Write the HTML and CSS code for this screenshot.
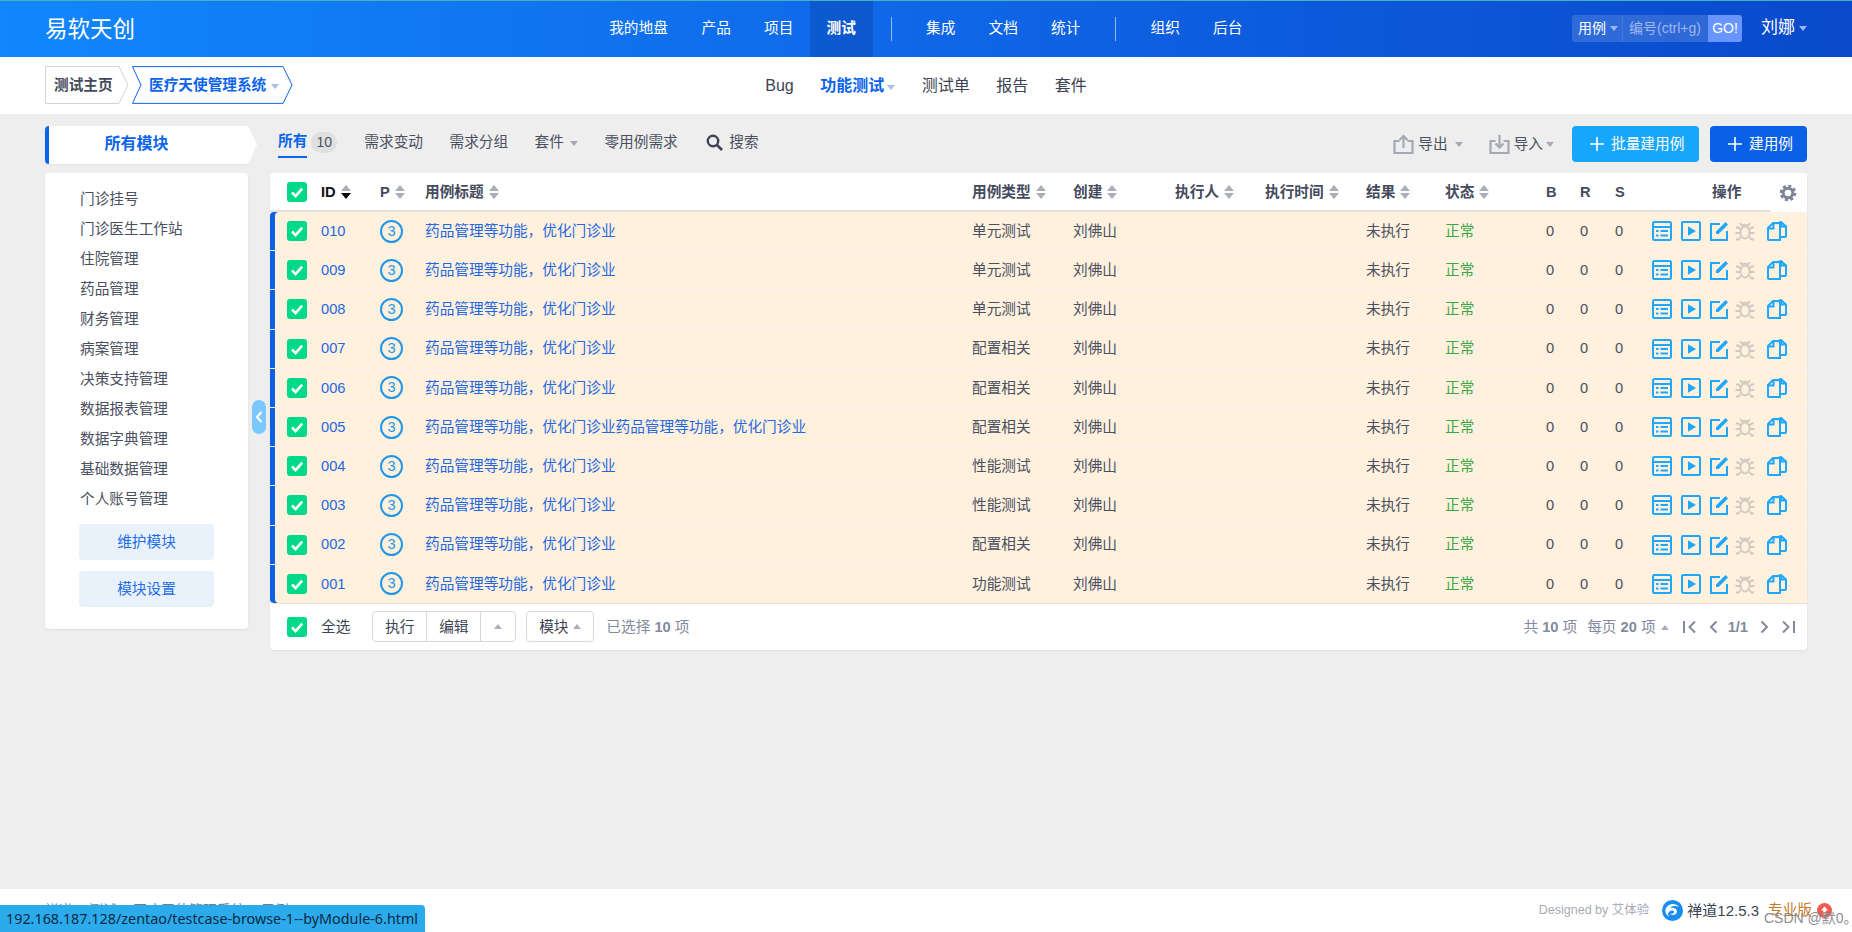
FILE: index.html
```html
<!DOCTYPE html>
<html lang="zh-CN">
<head>
<meta charset="utf-8">
<title>用例 - 医疗天使管理系统</title>
<link rel="stylesheet" href="styles.css">
</head>
<body>
<svg class="sprite" width="0" height="0" aria-hidden="true">
  <symbol id="i-check" viewBox="0 0 20 20"><path d="M5 10.500l3.600 3.600L15.200 6.600" fill="none" stroke="#fff" stroke-width="2.600"/></symbol>
  <symbol id="i-list" viewBox="0 0 20 20"><g fill="none" stroke="currentColor" stroke-width="2"><rect x="1" y="1" width="18" height="18" rx="1.500"/><path d="M1 6h18M4 10h2.500M8.500 10H16M4 14.500h2.500M8.500 14.500H16"/></g></symbol>
  <symbol id="i-play" viewBox="0 0 20 20"><rect x="1" y="1" width="18" height="18" rx="1" fill="none" stroke="currentColor" stroke-width="2"/><path d="M7 5.200l8 4.800-8 4.800z" fill="currentColor"/></symbol>
  <symbol id="i-edit" viewBox="0 0 20 20"><path d="M11 3H2v16h16v-9" fill="none" stroke="currentColor" stroke-width="2"/><path d="M7 13v-2.600L16.600 1 19 3.400 9.600 13z" fill="currentColor"/></symbol>
  <symbol id="i-bug" viewBox="0 0 20 20"><g fill="none" stroke="currentColor" stroke-width="1.800"><ellipse cx="10" cy="11.500" rx="4.600" ry="6"/><path d="M6.500 5.500C7 3 13 3 13.500 5.500M5 2l2 2.500M15 2l-2 2.500M1 6.500h2.500l2 2M19 6.500h-2.500l-2 2M.5 12h4.500M15 12h4.500M1 18.500h2.500l2-2.500M19 18.500h-2.500l-2-2.500"/></g></symbol>
  <symbol id="i-copy" viewBox="0 0 20 20"><g fill="none" stroke="currentColor" stroke-width="2"><path d="M1 7l5-5h7v17H2a1 1 0 0 1-1-1zM1 7.500h5.500V2"/><path d="M9.500 2.500L14 1l5 4.500V15a1 1 0 0 1-1 1h-5M14 1v4.500h5"/></g></symbol>
  <symbol id="i-plus" viewBox="0 0 14 14"><path d="M7 0v14M0 7h14" stroke="currentColor" stroke-width="1.600"/></symbol>
</svg>

<header class="topbar">
  <a class="logo">易软天创</a>
  <nav class="mainnav">
    <a class="mainnav-item">我的地盘</a>
    <a class="mainnav-item">产品</a>
    <a class="mainnav-item">项目</a>
    <a class="mainnav-item is-active">测试</a>
    <span class="mainnav-sep"></span>
    <a class="mainnav-item">集成</a>
    <a class="mainnav-item">文档</a>
    <a class="mainnav-item">统计</a>
    <span class="mainnav-sep"></span>
    <a class="mainnav-item">组织</a>
    <a class="mainnav-item">后台</a>
  </nav>
  <div class="topbar-right">
    <div class="quick-search">
      <span class="qs-type">用例<i class="caret caret-light"></i></span>
      <span class="qs-input">编号(ctrl+g)</span>
      <span class="qs-go">GO!</span>
    </div>
    <a class="user">刘娜<i class="caret caret-light"></i></a>
  </div>
</header>

<div class="subbar">
  <div class="crumbs">
    <a class="crumb crumb-home">
      <svg class="crumb-shape" viewBox="0 0 84 38"><polygon points="0.500,0.500 74,0.500 83,19 74,37.500 0.500,37.500" fill="#fff" stroke="#cfd3de"/></svg>
      <span class="crumb-text">测试主页</span>
    </a>
    <a class="crumb crumb-product">
      <svg class="crumb-shape" viewBox="0 0 162 38"><polygon points="0.500,0.500 152,0.500 161,19 152,37.500 0.500,37.500 9,19" fill="#fff" stroke="#0c64eb"/></svg>
      <span class="crumb-text">医疗天使管理系统<i class="caret caret-pale"></i></span>
    </a>
  </div>
  <nav class="subnav">
    <a class="subnav-item">Bug</a>
    <a class="subnav-item is-active">功能测试<i class="caret caret-pale"></i></a>
    <a class="subnav-item">测试单</a>
    <a class="subnav-item">报告</a>
    <a class="subnav-item">套件</a>
  </nav>
  <div></div>
</div>

<main class="main">
  <aside class="side">
    <div class="side-title">所有模块</div>
    <div class="side-card">
      <ul class="tree">
        <li>门诊挂号</li>
        <li>门诊医生工作站</li>
        <li>住院管理</li>
        <li>药品管理</li>
        <li>财务管理</li>
        <li>病案管理</li>
        <li>决策支持管理</li>
        <li>数据报表管理</li>
        <li>数据字典管理</li>
        <li>基础数据管理</li>
        <li>个人账号管理</li>
      </ul>
      <a class="side-btn">维护模块</a>
      <a class="side-btn">模块设置</a>
    </div>
    <a class="side-toggle"><svg width="8" height="12" viewBox="0 0 8 12"><path d="M6.500 1L2 6l4.500 5" fill="none" stroke="#fff" stroke-width="2.200"/></svg></a>
  </aside>

  <section class="content">
    <div class="toolbar">
      <div class="tabs">
        <a class="tab is-active">所有</a><span class="tab-badge">10</span>
        <a class="tab">需求变动</a>
        <a class="tab">需求分组</a>
        <a class="tab">套件<i class="caret caret-grey caret-gap"></i></a>
        <a class="tab">零用例需求</a>
        <a class="tab tab-search"><svg width="17" height="17" viewBox="0 0 17 17"><circle cx="7" cy="7" r="5.200" fill="none" stroke="#3c4353" stroke-width="2.400"/><path d="M11 11l5 5" stroke="#3c4353" stroke-width="2.600"/></svg>搜索</a>
      </div>
      <div class="actions">
        <a class="tool"><svg width="21" height="20" viewBox="0 0 21 20"><path d="M6.500 7H1.500v12h18V7h-5M10.500 14V2M6.500 6l4-4 4 4" fill="none" stroke="#a4a9b4" stroke-width="2.200"/></svg>导出<i class="caret caret-grey caret-gap"></i></a>
        <a class="tool"><svg width="21" height="20" viewBox="0 0 21 20"><path d="M6.500 7H1.500v12h18V7h-5M10.500 1v12M6.500 9.500l4 4 4-4" fill="none" stroke="#a4a9b4" stroke-width="2.200"/></svg>导入<i class="caret caret-grey"></i></a>
        <a class="btn btn-batch"><svg class="btn-icon"><use href="#i-plus"/></svg>批量建用例</a>
        <a class="btn btn-create"><svg class="btn-icon"><use href="#i-plus"/></svg>建用例</a>
      </div>
    </div>

    <div class="card">
      <table class="grid">
        <colgroup>
          <col class="c-cb"><col class="c-id"><col class="c-p"><col class="c-title"><col class="c-type"><col class="c-by"><col class="c-exec"><col class="c-time"><col class="c-res"><col class="c-st"><col class="c-b"><col class="c-r"><col class="c-s"><col class="c-ops">
        </colgroup>
        <thead>
          <tr>
            <th class="cell-cb"><span class="cb"><svg><use href="#i-check"/></svg></span></th>
            <th class="th-strong">ID<i class="sort sort-desc"></i></th>
            <th>P<i class="sort"></i></th>
            <th>用例标题<i class="sort"></i></th>
            <th>用例类型<i class="sort"></i></th>
            <th>创建<i class="sort"></i></th>
            <th>执行人<i class="sort"></i></th>
            <th>执行时间<i class="sort"></i></th>
            <th>结果<i class="sort"></i></th>
            <th>状态<i class="sort"></i></th>
            <th>B</th><th>R</th><th>S</th>
            <th class="th-ops">操作<span class="gear"><svg width="18" height="18" viewBox="0 0 18 18"><circle cx="9" cy="9" r="4.800" fill="none" stroke="#7d8596" stroke-width="3"/><circle cx="9" cy="9" r="7" fill="none" stroke="#7d8596" stroke-width="2.600" stroke-dasharray="3.100 2.400"/></svg></span></th>
          </tr>
        </thead>
        <tbody>
          <tr><td class="cell-cb"><span class="cb"><svg><use href="#i-check"/></svg></span></td><td class="link">010</td><td><span class="pri">3</span></td><td class="link">药品管理等功能，优化门诊业</td><td>单元测试</td><td>刘佛山</td><td></td><td></td><td>未执行</td><td class="ok">正常</td><td>0</td><td>0</td><td>0</td><td><div class="ops"><svg><use href="#i-list"/></svg><svg><use href="#i-play"/></svg><svg><use href="#i-edit"/></svg><svg class="op-off"><use href="#i-bug"/></svg><svg class="op-last"><use href="#i-copy"/></svg></div></td></tr>
          <tr><td class="cell-cb"><span class="cb"><svg><use href="#i-check"/></svg></span></td><td class="link">009</td><td><span class="pri">3</span></td><td class="link">药品管理等功能，优化门诊业</td><td>单元测试</td><td>刘佛山</td><td></td><td></td><td>未执行</td><td class="ok">正常</td><td>0</td><td>0</td><td>0</td><td><div class="ops"><svg><use href="#i-list"/></svg><svg><use href="#i-play"/></svg><svg><use href="#i-edit"/></svg><svg class="op-off"><use href="#i-bug"/></svg><svg class="op-last"><use href="#i-copy"/></svg></div></td></tr>
          <tr><td class="cell-cb"><span class="cb"><svg><use href="#i-check"/></svg></span></td><td class="link">008</td><td><span class="pri">3</span></td><td class="link">药品管理等功能，优化门诊业</td><td>单元测试</td><td>刘佛山</td><td></td><td></td><td>未执行</td><td class="ok">正常</td><td>0</td><td>0</td><td>0</td><td><div class="ops"><svg><use href="#i-list"/></svg><svg><use href="#i-play"/></svg><svg><use href="#i-edit"/></svg><svg class="op-off"><use href="#i-bug"/></svg><svg class="op-last"><use href="#i-copy"/></svg></div></td></tr>
          <tr><td class="cell-cb"><span class="cb"><svg><use href="#i-check"/></svg></span></td><td class="link">007</td><td><span class="pri">3</span></td><td class="link">药品管理等功能，优化门诊业</td><td>配置相关</td><td>刘佛山</td><td></td><td></td><td>未执行</td><td class="ok">正常</td><td>0</td><td>0</td><td>0</td><td><div class="ops"><svg><use href="#i-list"/></svg><svg><use href="#i-play"/></svg><svg><use href="#i-edit"/></svg><svg class="op-off"><use href="#i-bug"/></svg><svg class="op-last"><use href="#i-copy"/></svg></div></td></tr>
          <tr><td class="cell-cb"><span class="cb"><svg><use href="#i-check"/></svg></span></td><td class="link">006</td><td><span class="pri">3</span></td><td class="link">药品管理等功能，优化门诊业</td><td>配置相关</td><td>刘佛山</td><td></td><td></td><td>未执行</td><td class="ok">正常</td><td>0</td><td>0</td><td>0</td><td><div class="ops"><svg><use href="#i-list"/></svg><svg><use href="#i-play"/></svg><svg><use href="#i-edit"/></svg><svg class="op-off"><use href="#i-bug"/></svg><svg class="op-last"><use href="#i-copy"/></svg></div></td></tr>
          <tr><td class="cell-cb"><span class="cb"><svg><use href="#i-check"/></svg></span></td><td class="link">005</td><td><span class="pri">3</span></td><td class="link">药品管理等功能，优化门诊业药品管理等功能，优化门诊业</td><td>配置相关</td><td>刘佛山</td><td></td><td></td><td>未执行</td><td class="ok">正常</td><td>0</td><td>0</td><td>0</td><td><div class="ops"><svg><use href="#i-list"/></svg><svg><use href="#i-play"/></svg><svg><use href="#i-edit"/></svg><svg class="op-off"><use href="#i-bug"/></svg><svg class="op-last"><use href="#i-copy"/></svg></div></td></tr>
          <tr><td class="cell-cb"><span class="cb"><svg><use href="#i-check"/></svg></span></td><td class="link">004</td><td><span class="pri">3</span></td><td class="link">药品管理等功能，优化门诊业</td><td>性能测试</td><td>刘佛山</td><td></td><td></td><td>未执行</td><td class="ok">正常</td><td>0</td><td>0</td><td>0</td><td><div class="ops"><svg><use href="#i-list"/></svg><svg><use href="#i-play"/></svg><svg><use href="#i-edit"/></svg><svg class="op-off"><use href="#i-bug"/></svg><svg class="op-last"><use href="#i-copy"/></svg></div></td></tr>
          <tr><td class="cell-cb"><span class="cb"><svg><use href="#i-check"/></svg></span></td><td class="link">003</td><td><span class="pri">3</span></td><td class="link">药品管理等功能，优化门诊业</td><td>性能测试</td><td>刘佛山</td><td></td><td></td><td>未执行</td><td class="ok">正常</td><td>0</td><td>0</td><td>0</td><td><div class="ops"><svg><use href="#i-list"/></svg><svg><use href="#i-play"/></svg><svg><use href="#i-edit"/></svg><svg class="op-off"><use href="#i-bug"/></svg><svg class="op-last"><use href="#i-copy"/></svg></div></td></tr>
          <tr><td class="cell-cb"><span class="cb"><svg><use href="#i-check"/></svg></span></td><td class="link">002</td><td><span class="pri">3</span></td><td class="link">药品管理等功能，优化门诊业</td><td>配置相关</td><td>刘佛山</td><td></td><td></td><td>未执行</td><td class="ok">正常</td><td>0</td><td>0</td><td>0</td><td><div class="ops"><svg><use href="#i-list"/></svg><svg><use href="#i-play"/></svg><svg><use href="#i-edit"/></svg><svg class="op-off"><use href="#i-bug"/></svg><svg class="op-last"><use href="#i-copy"/></svg></div></td></tr>
          <tr><td class="cell-cb"><span class="cb"><svg><use href="#i-check"/></svg></span></td><td class="link">001</td><td><span class="pri">3</span></td><td class="link">药品管理等功能，优化门诊业</td><td>功能测试</td><td>刘佛山</td><td></td><td></td><td>未执行</td><td class="ok">正常</td><td>0</td><td>0</td><td>0</td><td><div class="ops"><svg><use href="#i-list"/></svg><svg><use href="#i-play"/></svg><svg><use href="#i-edit"/></svg><svg class="op-off"><use href="#i-bug"/></svg><svg class="op-last"><use href="#i-copy"/></svg></div></td></tr>
        </tbody>
      </table>
      <div class="grid-foot">
        <div class="foot-left">
          <span class="cb"><svg><use href="#i-check"/></svg></span>
          <span class="select-all">全选</span>
          <div class="btn-group">
            <a class="gbtn gbtn-text">执行</a><a class="gbtn gbtn-text">编辑</a><a class="gbtn gbtn-caret"><i class="caret caret-up"></i></a>
          </div>
          <a class="gbtn gbtn-single">模块<i class="caret caret-up"></i></a>
          <span class="selected">已选择 <b>10</b> 项</span>
        </div>
        <div class="pager">
          <span>共 <b>10</b> 项</span>
          <span class="pager-size">每页 <b>20</b> 项<i class="caret caret-up"></i></span>
          <svg class="pg pg-first" width="13" height="14" viewBox="0 0 13 14"><path d="M1 1v12M12 1.500L6.500 7l5.500 5.500" fill="none" stroke="#838a9d" stroke-width="2"/></svg>
          <svg class="pg pg-prev" width="9" height="14" viewBox="0 0 9 14"><path d="M7.500 1.500L2 7l5.500 5.500" fill="none" stroke="#838a9d" stroke-width="2"/></svg>
          <b class="pg-num">1/1</b>
          <svg class="pg pg-next" width="9" height="14" viewBox="0 0 9 14"><path d="M1.500 1.500L7 7l-5.500 5.500" fill="none" stroke="#838a9d" stroke-width="2"/></svg>
          <svg class="pg pg-last" width="13" height="14" viewBox="0 0 13 14"><path d="M1 1.500L6.500 7 1 12.500M12 1v12" fill="none" stroke="#838a9d" stroke-width="2"/></svg>
        </div>
      </div>
    </div>
  </section>
</main>

<footer class="footer">
  <div class="foot-path">禅道 &gt; 测试 &gt; 医疗天使管理系统 &gt; 用例</div>
  <div class="foot-info">
    <span class="designed">Designed by 艾体验</span>
    <svg class="zt-logo" width="21" height="21" viewBox="0 0 21 21"><circle cx="10.500" cy="10.500" r="10.500" fill="#1b8df0"/><path d="M4 8c3-5 10-5 13-1-3-1.500-7-1.500-9 1 3-1 7 0 7 3.500S10 16 7.500 13.500C9 14 12 14 12 12s-3-2-4.500-.5S5 15 8 17c-3-1-6-5-4-9z" fill="#fff"/></svg>
    <span class="zt-name">禅道12.5.3</span>
    <span class="zt-pro">专业版</span>
    <svg class="zt-up" width="15" height="15" viewBox="0 0 15 15"><circle cx="7.500" cy="7.500" r="7.500" fill="#ee5a52"/><path d="M7.500 3.500L4 7.500h2.300V12h2.400V7.500H11z" fill="#fff"/></svg>
  </div>
  <div class="watermark">CSDN @默0。</div>
  <div class="statusbubble">192.168.187.128/zentao/testcase-browse-1--byModule-6.html</div>
</footer>
</body>
</html>
```

FILE: styles.css
```css
* { box-sizing: border-box; }
html, body { margin: 0; padding: 0; }
body {
  width: 1852px;
  height: 932px;
  overflow: hidden;
  display: flex;
  flex-direction: column;
  background: #eeeeee;
  color: #3c4353;
  font: 14.67px/1.4 "Liberation Sans", "Noto Sans CJK SC", sans-serif;
}
a { color: inherit; text-decoration: none; }
ul { list-style: none; margin: 0; padding: 0; }
.sprite { position: absolute; }

.caret { display: inline-block; width: 0; height: 0; border-left: 4px solid transparent; border-right: 4px solid transparent; border-top: 5px solid #a9b1c4; margin-left: 5px; vertical-align: middle; }
.caret-light { border-top-color: #9db7ef; margin-left: 4px; }
.caret-pale { border-top-color: #a9bde6; }
.subnav .caret-pale { margin-left: 3px; }
.caret-grey { border-top-color: #a4a9b4; margin-left: 2px; }
.caret-gap { margin-left: 6px; }
.caret-up { border-top: 0; border-bottom: 5px solid #a9afbd; margin-left: 5px; }

/* top bar */
.topbar {
  height: 57px;
  flex: none;
  display: grid;
  grid-template-columns: 1fr auto 1fr;
  align-items: center;
  padding: 0 45px;
  color: #fff;
  border-top: 1px solid #46b0bf;
  background: linear-gradient(90deg, #1187fc 0%, #0f6aea 45%, #0a49cc 100%);
}
.logo { font-size: 22.5px; font-weight: 400; line-height: 57px; height: 56px; }
.mainnav { display: flex; align-items: stretch; height: 56px; }
.mainnav-item { width: 62.500px; text-align: center; line-height: 54px; color: #fff; font-size: 14.67px; }
.mainnav-item:first-child { width: 92px; padding-right: 1px; }
.mainnav-item.is-active { font-weight: 700; background: rgba(8, 45, 140, .28); }
.mainnav-sep { width: 37px; display: flex; align-items: center; justify-content: center; position: relative; }
.mainnav-sep::before { content: ""; width: 1px; height: 24px; background: rgba(255, 255, 255, .55); }
.topbar-right { display: flex; justify-content: flex-end; align-items: center; }
.quick-search { display: flex; height: 27px; margin-top: -2px; margin-right: 19px; }
.qs-type { width: 51px; padding-left: 6px; background: rgba(255, 255, 255, .15); border-radius: 3px 0 0 3px; border-right: 1px solid rgba(255,255,255,.1); color: #fff; font-size: 14px; line-height: 26px; white-space: nowrap; }
.qs-input { width: 85px; padding-left: 6px; background: rgba(255, 255, 255, .15); color: #a0b6ee; font-size: 14px; line-height: 27px; white-space: nowrap; }
.qs-go { width: 34px; background: #6895ff; border-radius: 0 3px 3px 0; color: #fff; font-size: 14px; line-height: 27px; text-align: center; }
.user { font-size: 17px; line-height: 24px; margin-top: -3px; white-space: nowrap; }

/* sub bar */
.subbar {
  height: 57px;
  flex: none;
  display: grid;
  grid-template-columns: 1fr auto 1fr;
  align-items: center;
  padding: 0 45px;
  background: #fff;
}
.crumbs { display: flex; gap: 3px; margin-top: -1px; }
.crumb { position: relative; display: block; height: 38px; line-height: 38px; }
.crumb-home { width: 84px; }
.crumb-product { width: 161px; color: #0c64eb; font-weight: 700; }
.crumb-shape { position: absolute; inset: 0; width: 100%; height: 100%; }
.crumb-text { position: relative; padding-left: 9px; }
.crumb-home .crumb-text { font-weight: 700; color: #444b5c; }
.crumb-product .crumb-text { padding-left: 17px; white-space: nowrap; }
.subnav { display: flex; align-items: center; gap: 26.500px; font-size: 16px; padding-top: 2px; }
.subnav-item { white-space: nowrap; color: #3c4353; }
.subnav-item.is-active { color: #0c64eb; font-weight: 700; }

/* main */
.main { position: relative; flex: 1; display: flex; gap: 22px; padding: 12px 45px 0; min-height: 0; }
.side { width: 203px; flex: none; }
.side-title {
  position: relative;
  height: 38px;
  margin-bottom: 9px;
  padding-right: 24px;
  background: #fff;
  border-left: 4px solid #0c64eb;
  border-radius: 4px 0 0 4px;
  color: #0c64eb;
  font-size: 16px;
  font-weight: 700;
  line-height: 36px;
  text-align: center;
  box-shadow: 0 1px 2px rgba(0, 0, 0, .06);
}
.side-title::after {
  content: "";
  position: absolute;
  left: 100%;
  top: 0;
  border-left: 9px solid #fff;
  border-top: 19px solid transparent;
  border-bottom: 19px solid transparent;
}
.side-card { height: 456px; padding: 10.500px 34px 0; background: #fff; border-radius: 4px; box-shadow: 0 1px 2px rgba(0, 0, 0, .08); }
.tree { margin: 0 0 10.500px 1px; }
.tree li { height: 30px; line-height: 30px; color: #4a5060; white-space: nowrap; }
.side-btn { display: block; height: 36px; margin-bottom: 11px; background: #e9f1fb; border-radius: 4px; color: #1f6ee8; line-height: 36px; text-align: center; }
.side-toggle { position: absolute; left: 252px; top: 286px; width: 14px; height: 34px; display: flex; align-items: center; justify-content: center; background: #7ac8ff; border-radius: 7px; }

.content { width: 1537px; flex: none; }
.toolbar { height: 36px; margin-bottom: 11px; display: flex; justify-content: space-between; align-items: flex-start; }
.tabs { display: flex; align-items: center; height: 32px; padding-left: 8px; }
.tab { margin-right: 26.500px; line-height: 33px; height: 32px; color: #4a5060; white-space: nowrap; }
.tab.is-active { margin-right: 4px; color: #0c64eb; font-weight: 700; border-bottom: 2px solid #0c64eb; line-height: 31px; }
.tab-badge { width: 26px; height: 21px; margin-right: 27px; background: #e0e0e0; border-radius: 11px; color: #4a5060; font-size: 14px; line-height: 21px; text-align: center; }
.tab-search { display: flex; align-items: center; gap: 6px; margin-left: 2px; margin-right: 0; }
.actions { display: flex; align-items: center; height: 36px; }
.tool { display: flex; align-items: center; gap: 4px; margin-right: 26px; color: #4a5060; white-space: nowrap; }
.tool:nth-child(2) { margin-right: 18px; }
.tool .caret { margin-left: -1px; }
.tool .caret-gap { margin-left: 3px; }
.btn { display: flex; align-items: center; height: 36px; border-radius: 4px; color: #fff; white-space: nowrap; }
.btn-icon { width: 14px; height: 14px; margin-right: 7px; color: #fff; }
.btn-batch { width: 127px; padding-left: 18px; margin-right: 11px; background: #18a6fb; }
.btn-create { width: 97px; padding-left: 18px; background: #0b60e8; }

/* table card */
.card { width: 1537px; background: #fff; border-radius: 4px; box-shadow: 0 1px 2px rgba(0, 0, 0, .08); }
.grid { width: 1537px; table-layout: fixed; border-collapse: separate; border-spacing: 0; }
.c-cb { width: 51px; } .c-id { width: 59px; } .c-p { width: 45px; } .c-title { width: 547px; }
.c-type { width: 101px; } .c-by { width: 102px; } .c-exec { width: 90px; } .c-time { width: 101px; }
.c-res { width: 79px; } .c-st { width: 101px; } .c-b { width: 34px; } .c-r { width: 35px; } .c-s { width: 37px; } .c-ops { width: 155px; }
.grid th, .grid td { padding: 0; text-align: left; white-space: nowrap; }
.grid th { height: 39px; padding-top: 1px; font-weight: 700; color: #444b5c; border-bottom: 2px solid #e5e2de; vertical-align: middle; }
.grid th.th-strong { color: #111; }
.grid th.cell-cb { padding-top: 0; }
.grid td { height: 39.200px; background: #fff1de; border-bottom: 1px solid #f5efe6; color: #4a5060; vertical-align: middle; }
.grid tbody tr:last-child td { border-bottom-color: #e3dfda; }
.grid .th-ops { position: relative; padding-left: 60px; }
.gear { position: absolute; right: 0; top: 0; bottom: -2px; width: 36px; display: flex; align-items: center; padding-left: 8px; background: #fff; border-top-right-radius: 4px; }
.sort { display: inline-flex; flex-direction: column; gap: 2px; margin-left: 5px; vertical-align: middle; margin-top: -2px; }
.sort::before, .sort::after { content: ""; width: 0; height: 0; border-left: 5px solid transparent; border-right: 5px solid transparent; }
.sort::before { border-bottom: 6px solid #a9aeb8; }
.sort::after { border-top: 6px solid #a9aeb8; }
.sort-desc::after { border-top-color: #000; }
.grid .cell-cb { padding-left: 17px; }
.grid td.cell-cb { box-shadow: inset 5px 0 #0c60e1; }
.grid tbody tr:first-child td.cell-cb { border-top-left-radius: 4px; }
.grid tbody tr:last-child td.cell-cb { border-bottom-left-radius: 4px; }
.cb { display: block; width: 20px; height: 20px; background: #00da88; border-radius: 3px; }
.cb svg { display: block; width: 20px; height: 20px; }
.grid .link { color: #2467e0; }
.grid .ok { color: #3aa847; }
.pri { display: block; width: 23px; height: 23px; border: 2px solid #2196e8; border-radius: 50%; color: #2196e8; font-size: 14.67px; line-height: 19px; text-align: center; }
.ops { display: flex; color: #1ea7fd; }
.ops svg { width: 20px; height: 20px; margin-right: 9px; flex: none; }
.ops svg:nth-child(3) { margin-left: -1px; }
.ops .op-off { color: #cfc9c0; margin-left: -3px; margin-right: 13px; }
.ops .op-last { margin-right: 0; margin-left: -1px; }

.grid-foot { height: 46px; display: flex; justify-content: space-between; align-items: center; padding: 0 12px 0 17px; }
.foot-left, .pager { display: flex; align-items: center; }
.select-all { margin-left: 14px; margin-right: 22px; }
.btn-group { display: flex; height: 31px; border: 1px solid #d5d8e2; border-radius: 4px; margin-right: 10px; }
.gbtn { display: flex; align-items: center; justify-content: center; color: #3c4353; }
.gbtn-text { width: 54px; border-right: 1px solid #d5d8e2; }
.gbtn-caret { width: 34px; }
.gbtn-caret .caret { margin-left: 0; }
.gbtn-single { width: 68px; height: 31px; border: 1px solid #d5d8e2; border-radius: 4px; margin-right: 12px; }
.selected, .pager { color: #838a9d; }
.pager { padding-top: 0; white-space: nowrap; }
.pager-size { margin-left: 10px; }
.pg-first { margin-left: 14px; }
.pg-prev { margin-left: 13px; }
.pg-num { margin-left: 10px; color: #838a9d; }
.pg-next { margin-left: 12px; }
.pg-last { margin-left: 13px; }

/* footer */
.footer { position: relative; height: 43px; flex: none; display: flex; justify-content: space-between; align-items: center; padding: 0 20px 0 45px; background: #fff; }
.foot-path { color: #777e8e; font-size: 14px; }
.foot-info { display: flex; align-items: center; }
.designed { color: #a7abb5; font-size: 12.500px; margin-right: 13px; }
.zt-name { margin-left: 4px; color: #3c4353; font-size: 15px; }
.zt-pro { margin-left: 9px; color: #c87a2c; font-size: 14.67px; }
.zt-up { margin-left: 5px; }
.watermark { position: absolute; left: 1764px; top: 20px; color: #8d8d8d; font-size: 14px; line-height: 18px; white-space: nowrap; }
.statusbubble { position: absolute; left: 0; bottom: 0; width: 425px; height: 27px; padding-left: 6px; background: #2babeb; border-top-right-radius: 4px; color: #0c2a44; font: 14.35px/27px "Noto Sans", sans-serif; white-space: nowrap; }
```
